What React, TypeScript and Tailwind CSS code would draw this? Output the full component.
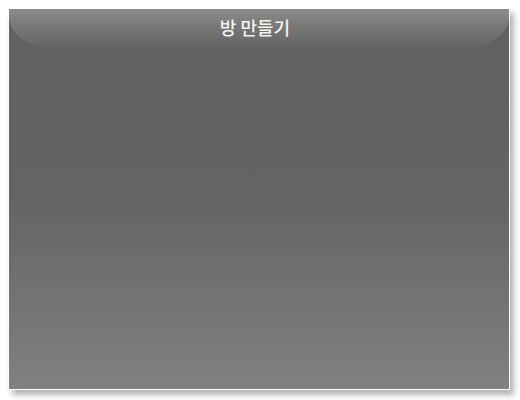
export default function App() {
  return (
    <main className="h-[400px] w-[520px] bg-white pl-[8px] pt-[8px]" style={{ fontFamily: '"Noto Sans CJK KR", "Noto Sans", sans-serif' }}>
      <div className="relative h-[382px] w-[502px] overflow-hidden border border-white bg-gradient-to-b from-[#616161] via-[#646464] to-[#818181] shadow-[4px_5px_6px_rgba(0,0,0,0.3)]">
        <div className="absolute inset-x-0 top-0 h-[42px] rounded-b-[55px_34px] bg-gradient-to-b from-[#8c8c8c] via-[#747474] to-[#626262]" />
        <div className="relative flex h-[36px] items-center justify-center pr-[8px]">
          <h1 className="text-[18px] font-medium leading-none text-[#f2f2f2]">방 만들기</h1>
        </div>
      </div>
    </main>
  );
}
